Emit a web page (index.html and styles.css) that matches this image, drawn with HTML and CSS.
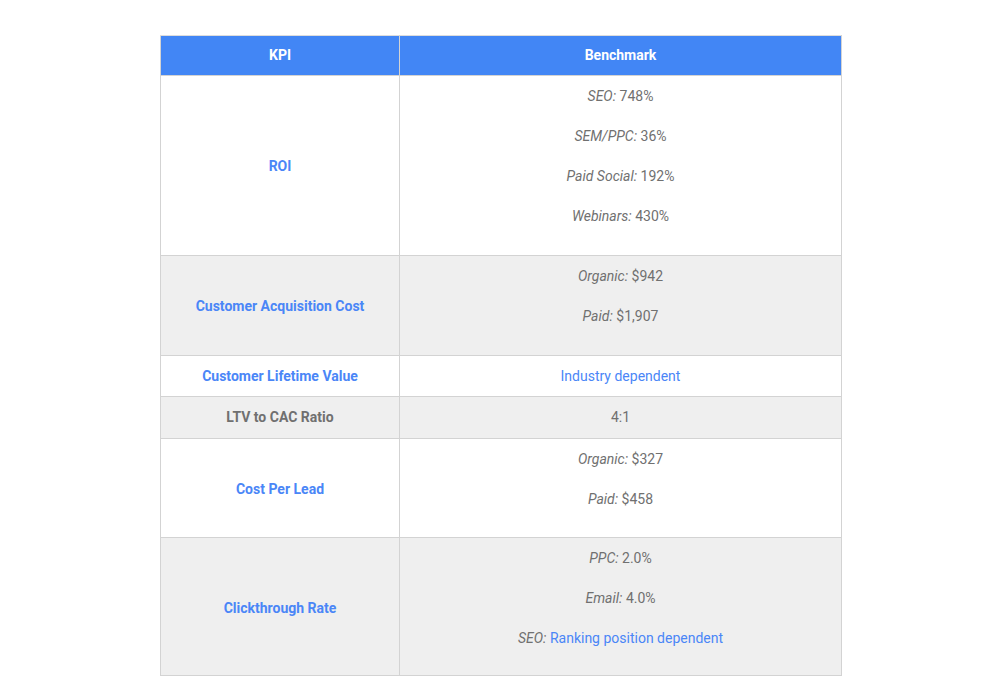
FILE: index.html
```html
<!DOCTYPE html>
<html>
<head>
<meta charset="utf-8">
<link rel="stylesheet" href="styles.css">
</head>
<body>
<div class="wrap">
<table class="kpi">
  <thead>
    <tr><th class="c1">KPI</th><th class="c2">Benchmark</th></tr>
  </thead>
  <tbody>
    <tr>
      <td class="name"><a>ROI</a></td>
      <td><p><em>SEO:</em> 748%</p><p><em>SEM/PPC:</em> 36%</p><p><em>Paid Social:</em> 192%</p><p><em>Webinars:</em> 430%</p></td>
    </tr>
    <tr class="alt">
      <td class="name"><a>Customer Acquisition Cost</a></td>
      <td><p><em>Organic:</em> $942</p><p><em>Paid:</em> $1,907</p></td>
    </tr>
    <tr class="r-clv">
      <td class="name"><a>Customer Lifetime Value</a></td>
      <td><a>Industry dependent</a></td>
    </tr>
    <tr class="alt r-ltv">
      <td class="name plain">LTV to CAC Ratio</td>
      <td>4:1</td>
    </tr>
    <tr class="r-tight">
      <td class="name"><a>Cost Per Lead</a></td>
      <td><p><em>Organic:</em> $327</p><p><em>Paid:</em> $458</p></td>
    </tr>
    <tr class="alt r-last">
      <td class="name"><a>Clickthrough Rate</a></td>
      <td><p><em>PPC:</em> 2.0%</p><p><em>Email:</em> 4.0%</p><p><em>SEO:</em> <a>Ranking position dependent</a></p></td>
    </tr>
  </tbody>
</table>
</div>
</body>
</html>
```
FILE: styles.css
```css
html, body {
  margin: 0;
  padding: 0;
  background: #fff;
}
body {
  font-family: Roboto, "Liberation Sans", sans-serif;
  font-size: 14px;
  color: #707070;
}
.wrap {
  padding: 35px 0 0 160px;
}
.kpi {
  border-collapse: collapse;
  width: 682px;
  table-layout: fixed;
}
.kpi th {
  background: #4286f5;
  color: #fff;
  font-weight: 700;
  height: 40px;
  padding: 0 10px 1px;
  box-sizing: border-box;
  line-height: 20px;
  border: 1px solid #d3d3d3;
  border-top-color: #ddd;
}
.kpi th.c1 { width: 239px; }
.kpi td {
  border: 1px solid #d3d3d3;
  text-align: center;
  vertical-align: middle;
  padding: 10px 10px 9px;
  line-height: 20px;
}
.kpi tr.r-clv td { padding-bottom: 10px; }
.kpi tr.r-ltv td { padding-bottom: 11px; }
.kpi tr.r-tight td { padding-bottom: 8px; }
.kpi tr.r-last td { padding-bottom: 7px; }
.kpi tr.alt td {
  background: #efefef;
}
.kpi td p {
  margin: 0 0 20px;
}
.kpi em { font-style: italic; }
.kpi a {
  color: #4a86f7;
  text-decoration: none;
}
.kpi td.name {
  font-weight: 700;
}
.kpi td.name.plain { color: #707070; }
```
